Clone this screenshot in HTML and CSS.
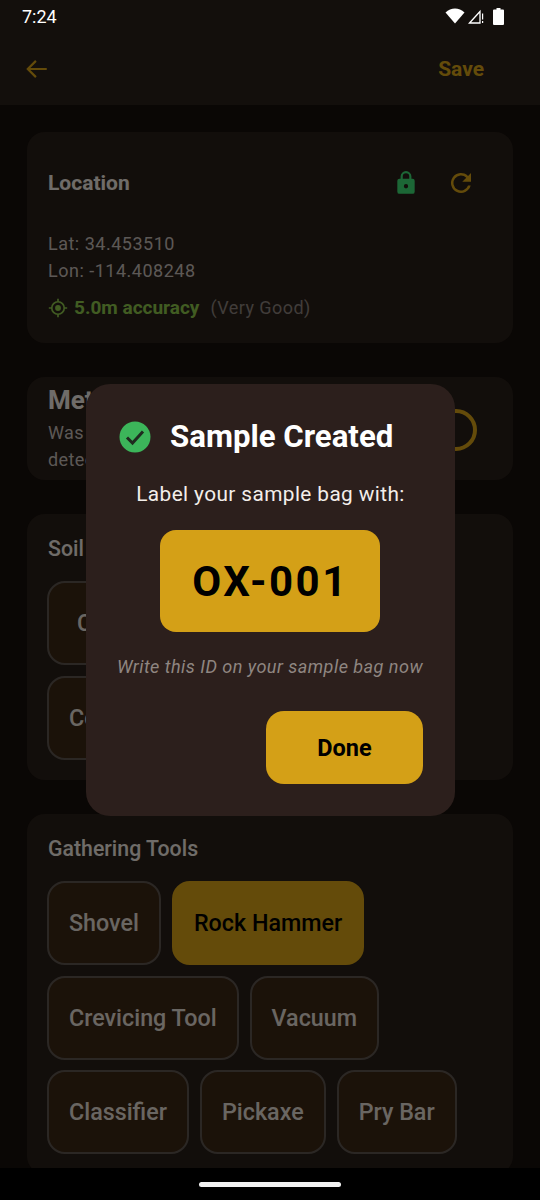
FILE: index.html
```html
<!DOCTYPE html>
<html lang="en">
<head>
    <meta charset="UTF-8">
    <meta name="viewport" content="width=device-width, initial-scale=1.0">
    <title>New Sample</title>
    <link rel="stylesheet" href="styles.css">
</head>
<body>
    <div class="app-container">
        <!-- Header -->
        <div class="header">
            <svg class="back-icon" viewBox="0 0 24 24"><path d="M21 12H4M11 4.500L3.500 12l7.500 7.500" fill="none" stroke="#d4a017" stroke-width="2"/></svg>
            <span class="save">Save</span>
        </div>

        <!-- Main Content -->
        <div class="main-content">
            <div class="card card-location">
                <div class="location-head">
                    <h2>Location</h2>
                    <div class="location-actions">
                        <svg class="lock-icon" viewBox="0 0 24 24"><path d="M18 8h-1V6A5 5 0 0 0 7 6v2H6a2 2 0 0 0-2 2v10a2 2 0 0 0 2 2h12a2 2 0 0 0 2-2V10a2 2 0 0 0-2-2zM9 6a3 3 0 0 1 6 0v2H9zm3 11a2 2 0 1 1 0-4 2 2 0 0 1 0 4z" fill="#3ddc74"/></svg>
                        <svg class="refresh-icon" viewBox="0 0 24 24"><path d="M17.650 6.350A8 8 0 1 0 19.730 14h-2.080a6 6 0 1 1-1.410-6.240L13 11h7V4z" fill="#d4a017"/></svg>
                    </div>
                </div>
                <p class="coord">Lat: 34.453510</p>
                <p class="coord">Lon: -114.408248</p>
                <div class="accuracy">
                    <svg class="target-icon" viewBox="0 0 24 24"><circle cx="12" cy="12" r="7.500" fill="none" stroke="#8bc34a" stroke-width="2"/><circle cx="12" cy="12" r="3.500" fill="#8bc34a"/><path d="M12 1v3.500M12 19.500V23M1 12h3.500M19.500 12H23" stroke="#8bc34a" stroke-width="2"/></svg>
                    <span class="accuracy-value">5.0m accuracy</span>
                    <span class="accuracy-note">(Very Good)</span>
                </div>
            </div>

            <div class="card card-metal">
                <div class="metal-text">
                    <h2 class="metal-title">Metal Detected</h2>
                    <p class="metal-desc">Was metal detected?</p>
                </div>
                <div class="switch-ring"></div>
            </div>

            <div class="card card-soil">
                <h3>Soil Type</h3>
                <div class="chips">
                    <div class="chip chip-wide">Clay Loam</div>
                    <div class="chip">Coarse Gravel</div>
                </div>
            </div>

            <div class="card card-tools">
                <h3>Gathering Tools</h3>
                <div class="chips">
                    <div class="chip">Shovel</div>
                    <div class="chip selected">Rock Hammer</div>
                    <div class="chip">Crevicing Tool</div>
                    <div class="chip">Vacuum</div>
                    <div class="chip">Classifier</div>
                    <div class="chip">Pickaxe</div>
                    <div class="chip">Pry Bar</div>
                </div>
            </div>
        </div>
    </div>

    <!-- Dialog -->
    <div class="scrim"></div>
    <div class="dialog">
        <div class="dialog-title">
            <svg class="check-icon" viewBox="0 0 32 32"><circle cx="16" cy="16" r="15.500" fill="#3cb55a"/><path d="M8 16.500l5.500 5.500L24 10.500" fill="none" stroke="#1f2a1f" stroke-width="3"/></svg>
            <span>Sample Created</span>
        </div>
        <p class="dialog-label">Label your sample bag with:</p>
        <div class="sample-id">OX-001</div>
        <p class="dialog-hint">Write this ID on your sample bag now</p>
        <div class="dialog-actions">
            <div class="done-btn">Done</div>
        </div>
    </div>

    <!-- Status Bar -->
    <div class="status-bar">
        <span class="clock">7:24</span>
        <div class="status-icons">
            <svg class="wifi-icon" viewBox="0 0 20 16"><path d="M0.500 4.500C6 -0.800 14 -0.800 19.500 4.500L10 15.500z" fill="#fff"/></svg>
            <svg class="signal-icon" viewBox="0 0 16 16"><path d="M1.500 15L12 3.500V15z" fill="none" stroke="#fff" stroke-width="1.300"/><path d="M14.600 5.500v6M14.600 13v2" stroke="#fff" stroke-width="1.200"/></svg>
            <svg class="battery-icon" viewBox="0 0 11 17"><path d="M3.500 0h4v1.500H10a1 1 0 0 1 1 1V16a1 1 0 0 1-1 1H1a1 1 0 0 1-1-1V2.500a1 1 0 0 1 1-1h2.500z" fill="#fff"/></svg>
        </div>
    </div>

    <!-- Gesture Nav -->
    <div class="gesture-bar"><div class="gesture-pill"></div></div>
</body>
</html>
```

FILE: styles.css
```css
* { margin: 0; padding: 0; box-sizing: border-box; font-family: Roboto, sans-serif; }
html, body { width: 540px; height: 1200px; overflow: hidden; }
body { background: #160f0b; color: #fff; position: relative; }

/* Main Container */
.app-container { display: flex; flex-direction: column; height: 1200px; overflow: hidden; }

/* Header */
.header { display: flex; align-items: center; justify-content: space-between; height: 105px; padding: 32px 56px 0 24px; background: #29201a; flex-shrink: 0; }
.back-icon { width: 26px; height: 26px; }
.save { color: #d4a017; font-size: 21px; font-weight: 700; }

/* Main Content */
.main-content { display: flex; flex-direction: column; gap: 34px; padding: 27px 27px 0; }
.card { background: #281f19; border-radius: 18px; padding: 20px 21px; flex-shrink: 0; }
.card h2 { color: #ece5df; font-size: 21px; font-weight: 700; }
.card h3 { color: #ece5df; font-size: 21.3px; font-weight: 500; line-height: 30px; margin-bottom: 17px; }

/* Location */
.card-location { height: 211px; }
.location-head { display: flex; align-items: center; justify-content: space-between; height: 62px; margin-bottom: 16px; }
.location-actions { display: flex; align-items: center; gap: 27px; padding-right: 16px; }
.lock-icon { width: 26px; height: 28px; }
.refresh-icon { width: 30px; height: 30px; }
.coord { color: #c4bcb6; font-size: 18px; line-height: 27px; letter-spacing: 0.5px; }
.accuracy { display: flex; align-items: center; gap: 6px; margin-top: 12px; font-size: 19px; line-height: 24px; }
.target-icon { width: 20px; height: 20px; }
.accuracy-value { color: #8bc34a; font-weight: 700; margin-right: 5px; }
.accuracy-note { color: #8a817b; font-size: 18px; letter-spacing: 0.45px; }

/* Metal detector */
.card-metal { display: flex; align-items: center; justify-content: space-between; height: 103px; padding: 10px 36px 0 21px; }
.card h2.metal-title { font-size: 26px; line-height: 28px; margin-top: -8px; white-space: nowrap; }
.metal-text { width: 100px; }
.metal-desc { color: #c4bcb6; font-size: 18px; line-height: 27px; letter-spacing: 0.4px; margin-top: 5px; }
.switch-ring { width: 42px; height: 42px; border: 4px solid #d4a017; border-radius: 50%; margin-top: -8px; }

/* Chips */
.card-soil { height: 266px; }
.chips { display: flex; flex-wrap: wrap; gap: 10.5px 11px; margin-left: -1px; }
.chip { display: flex; align-items: center; height: 84px; padding: 0 20px; border: 2px solid #5c544e; border-radius: 18px; background: #3b2714; color: #e0d8d0; font-size: 23.3px; font-weight: 500; }
.chip.selected { background: #d4a017; border-color: #d4a017; color: #000; }
.chip-wide { padding: 0 28px; }
.card-soil .chips { flex-direction: column; align-items: flex-start; }

/* Dialog */
.scrim { position: absolute; top: 0; left: 0; width: 540px; height: 1200px; background: rgba(0, 0, 0, 0.53); }
.dialog { position: absolute; top: 384px; left: 86px; width: 369px; height: 432px; padding: 32px 32px 0; background: #2c1f1c; border-radius: 24px; display: flex; flex-direction: column; align-items: center; }
.dialog-title { display: flex; align-items: center; gap: 19px; align-self: flex-start; margin-left: 1px; font-size: 31.2px; font-weight: 700; line-height: 42px; }
.check-icon { width: 32px; height: 32px; }
.dialog-label { margin-top: 22px; font-size: 20.8px; line-height: 28px; letter-spacing: 0.4px; color: #f3eeea; white-space: nowrap; }
.sample-id { display: flex; align-items: center; justify-content: center; width: 220px; height: 102px; margin: 22px 2px 0 0; padding-left: 2px; background: #d4a017; border-radius: 16px; color: #000; font-size: 42px; font-weight: 700; letter-spacing: 2.5px; }
.dialog-hint { margin: 23px 1px 0 0; color: #8f8681; font-size: 18.1px; font-style: italic; line-height: 24px; letter-spacing: 0.45px; white-space: nowrap; }
.dialog-actions { align-self: stretch; display: flex; justify-content: flex-end; margin-top: 32px; }
.done-btn { display: flex; align-items: center; justify-content: center; width: 157px; height: 73px; background: #d4a017; border-radius: 18px; color: #000; font-size: 23.5px; font-weight: 700; }

/* Status Bar */
.status-bar { position: absolute; top: 0; left: 0; width: 540px; height: 32px; display: flex; align-items: center; justify-content: space-between; padding: 0 36px 0 22px; }
.clock { font-size: 18px; color: #fff; }
.status-icons { display: flex; align-items: center; gap: 3px; }
.wifi-icon { width: 20px; height: 16px; }
.signal-icon { width: 16px; height: 16px; }
.battery-icon { width: 11px; height: 17px; margin-left: 6px; }

/* Gesture Nav */
.gesture-bar { position: absolute; bottom: 0; left: 0; width: 540px; height: 32px; background: #000; display: flex; justify-content: center; align-items: flex-start; padding-top: 14px; }
.gesture-pill { width: 142px; height: 5px; background: #f2f2f2; border-radius: 3px; }
```
